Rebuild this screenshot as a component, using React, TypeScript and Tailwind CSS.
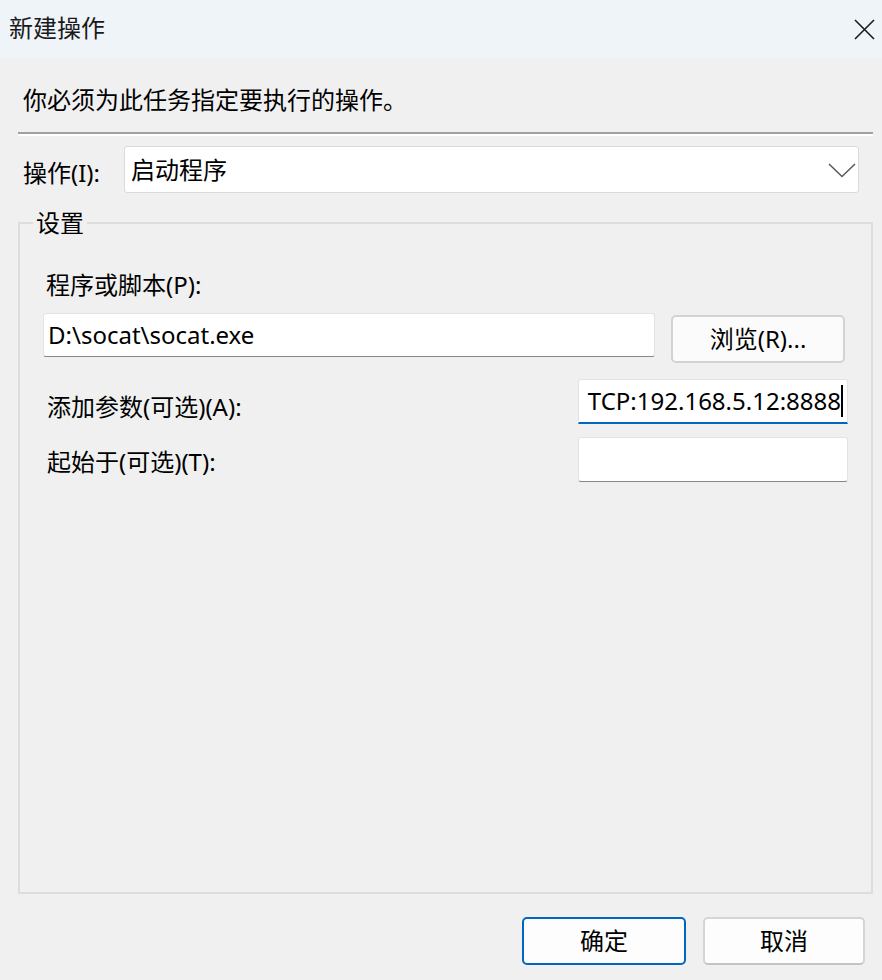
export default function App() {
  return (
    <div className="flex h-[980px] w-[882px] flex-col bg-[#f0f0f0] font-[family-name:'Noto_Sans','Noto_Sans_CJK_SC',sans-serif] text-[24px] leading-8 text-black">
      {/* title bar */}
      <div className="flex h-[58px] shrink-0 items-center justify-between bg-[#eff4f9] pl-[9px] pr-[7px]">
        <span className="pb-[2px] text-[#1a1a1a]">新建操作</span>
        <svg width="21" height="21" viewBox="0 0 21 21" fill="none">
          <path d="M1 1L20 20M20 1L1 20" stroke="#1b1b1b" strokeWidth="1.6" />
        </svg>
      </div>

      <p className="ml-[23px] mt-[26px]">你必须为此任务指定要执行的操作。</p>
      <div className="ml-[18px] mr-[9px] mt-4 border-t-2 border-b-2 border-t-[#a0a0a0] border-b-white" />

      {/* action */}
      <div className="mt-[10px] flex items-start pl-[23px]">
        <span className="mt-[11px] w-[101px]">操作(I):</span>
        <div className="flex h-[47px] w-[735px] items-center justify-between rounded-[3px] border border-[#dadada] bg-white pl-[6px] pr-[2px]">
          <span>启动程序</span>
          <svg width="28" height="16" viewBox="0 0 28 16" fill="none">
            <path d="M1 2L14 14.5L27 2" stroke="#5c5c5c" strokeWidth="1.6" />
          </svg>
        </div>
      </div>

      {/* settings group */}
      <fieldset className="ml-[18px] mr-[9px] mt-[14px] flex min-h-0 flex-1 flex-col border-2 border-[#dddddd] px-[23px]">
        <legend className="ml-[-10px] px-[3px]">设置</legend>

        <span className="mt-[30px] pl-[3px]">程序或脚本(P):</span>
        <div className="mt-[12px] flex items-start">
          <div className="flex h-[44px] w-[612px] items-center rounded-[3px] border border-[#e3e3e3] border-b-[#868686] bg-white pl-[4px]">
            D:\socat\socat.exe
          </div>
          <button className="ml-[16px] mt-[2px] flex h-[48px] w-[174px] items-center justify-center rounded-[5px] border-2 border-[#d3d3d3] bg-[#fbfbfb]">
            浏览(R)...
          </button>
        </div>

        <div className="mt-[16px] flex items-start justify-between">
          <span className="mt-[12px] pl-[4px]">添加参数(可选)(A):</span>
          <div className="flex h-[45px] w-[270px] items-center justify-end overflow-hidden rounded-t-[3px] border border-b-2 border-[#e3e3e3] border-b-[#0067c0] bg-white pr-[4px]">
            <span className="whitespace-nowrap">TCP:192.168.5.12:8888</span>
            <span className="h-[32px] w-[2px] bg-black" />
          </div>
        </div>

        <div className="mt-[13px] flex items-start justify-between">
          <span className="mt-[9px] pl-[4px]">起始于(可选)(T):</span>
          <div className="h-[45px] w-[270px] rounded-[3px] border border-[#e3e3e3] border-b-[#868686] bg-white" />
        </div>
      </fieldset>

      {/* buttons */}
      <div className="mb-[15px] mr-[17px] mt-[23px] flex justify-end gap-[17px]">
        <button className="flex h-[48px] w-[164px] items-center justify-center rounded-[5px] border-2 border-[#0067c0] bg-[#fdfdfd]">
          确定
        </button>
        <button className="flex h-[48px] w-[162px] items-center justify-center rounded-[5px] border-2 border-[#d5d5d5] border-b-[#c4c4c4] bg-[#fdfdfd]">
          取消
        </button>
      </div>
    </div>
  );
}
